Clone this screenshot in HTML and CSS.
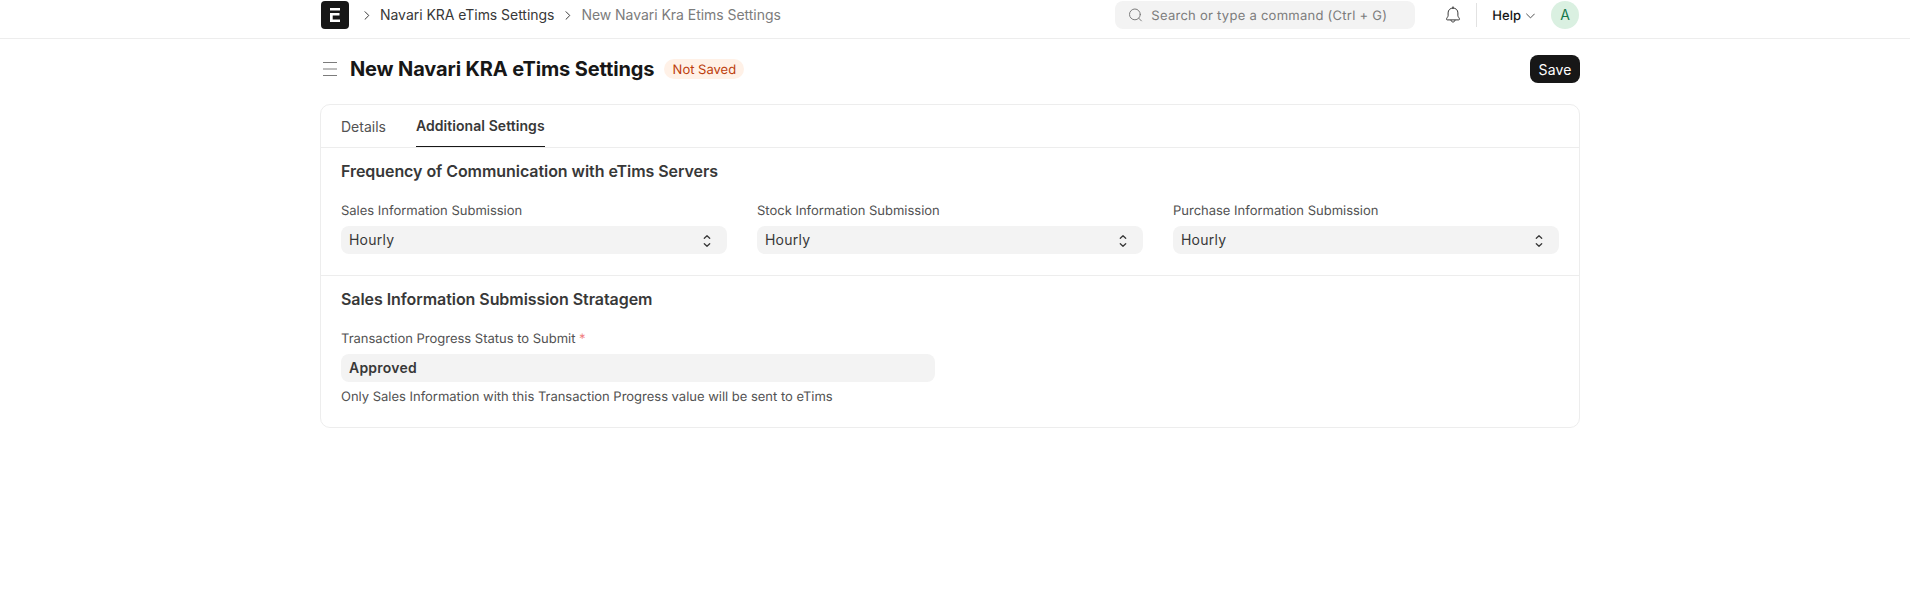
FILE: index.html
```html
<!DOCTYPE html>
<html lang="en">
<head>
<meta charset="utf-8">
<title>New Navari KRA eTims Settings</title>
<link rel="stylesheet" href="styles.css">
</head>
<body>
<header class="navbar">
  <div class="container navbar-inner">
    <svg class="logo" width="28" height="28" viewBox="0 0 28 28"><rect width="28" height="28" rx="4" fill="#171717"/><path d="M9 7h10v2.500H9zM9 12h9.500v2.500h-6.800v4H19V21H9z" fill="#fff"/></svg>
    <nav class="breadcrumbs">
      <svg class="crumb-arrow" width="6" height="9" viewBox="0 0 6 9"><path d="M1 .7l3.800 3.800L1 8.300"/></svg>
      <a class="crumb">Navari KRA eTims Settings</a>
      <svg class="crumb-arrow" width="6" height="9" viewBox="0 0 6 9"><path d="M1 .7l3.800 3.800L1 8.300"/></svg>
      <a class="crumb crumb-current">New Navari Kra Etims Settings</a>
    </nav>
    <div class="search">
      <svg width="14" height="14" viewBox="0 0 14 14" class="search-icon"><circle cx="5.900" cy="6.400" r="5.400"/><path d="M9.800 10.300l2.600 2.600"/></svg>
      <span>Search or type a command (Ctrl + G)</span>
    </div>
    <svg class="bell" width="16" height="18" viewBox="0 0 16 18"><path d="M8 2c-2.900 0-4.900 2.100-4.900 4.900v2.900c0 .9-1.600 2.300-1.600 3.300 0 .5.300.8.800.8h11.400c.5 0 .8-.3.800-.8 0-1-1.600-2.400-1.600-3.300V6.900C12.900 4.100 10.900 2 8 2zM6 14.300c.2 1 .9 1.700 2 1.700s1.800-.7 2-1.700M8 .8V2"/></svg>
    <span class="divider"></span>
    <span class="help">Help</span>
    <svg class="help-arrow" width="9" height="6" viewBox="0 0 9 6"><path d="M.6 1l3.900 3.900L8.400 1"/></svg>
    <span class="avatar">A</span>
  </div>
</header>
<main class="container">
  <div class="page-head">
    <svg class="menu" width="14" height="14" viewBox="0 0 14 14"><path d="M0 .5h14M0 7h14M0 13.500h14"/></svg>
    <h1 class="title">New Navari KRA eTims Settings</h1>
    <span class="indicator">Not Saved</span>
    <button class="save">Save</button>
  </div>
  <div class="card">
    <div class="tabs">
      <a class="tab">Details</a>
      <a class="tab tab-active">Additional Settings</a>
    </div>
    <section class="section section-frequency">
      <h2 class="section-title">Frequency of Communication with eTims Servers</h2>
      <div class="columns">
        <div class="field">
          <label class="label">Sales Information Submission</label>
          <div class="control">Hourly<svg class="sort" width="8" height="14" viewBox="0 0 8 14"><path d="M1.300 4.200L4 1.700l2.700 2.500M1.300 9.800L4 12.300l2.700-2.500"/></svg></div>
        </div>
        <div class="field">
          <label class="label">Stock Information Submission</label>
          <div class="control">Hourly<svg class="sort" width="8" height="14" viewBox="0 0 8 14"><path d="M1.300 4.200L4 1.700l2.700 2.500M1.300 9.800L4 12.300l2.700-2.500"/></svg></div>
        </div>
        <div class="field">
          <label class="label">Purchase Information Submission</label>
          <div class="control">Hourly<svg class="sort" width="8" height="14" viewBox="0 0 8 14"><path d="M1.300 4.200L4 1.700l2.700 2.500M1.300 9.800L4 12.300l2.700-2.500"/></svg></div>
        </div>
      </div>
    </section>
    <section class="section section-stratagem">
      <h2 class="section-title">Sales Information Submission Stratagem</h2>
      <div class="field field-half">
        <label class="label">Transaction Progress Status to Submit <span class="required">*</span></label>
        <div class="control control-bold">Approved</div>
        <p class="hint">Only Sales Information with this Transaction Progress value will be sent to eTims</p>
      </div>
    </section>
  </div>
</main>
</body>
</html>
```
FILE: styles.css
```css
* { box-sizing: border-box; }
body {
  margin: 0;
  background: #fff;
  color: #383838;
  font: 420 14px/20px Inter, "Liberation Sans", sans-serif;
}
svg { display: block; flex: none; fill: none; stroke-linecap: round; stroke-linejoin: round; }
.container { width: 1260px; margin-left: 320px; }
.navbar { height: 39px; border-bottom: 1px solid #ededed; padding-top: 1px; }
.navbar-inner { display: flex; align-items: center; height: 28px; padding: 0 1px; }
.logo { margin-right: 15px; }
.breadcrumbs { display: flex; align-items: center; }
.crumb-arrow { stroke: #383838; margin-top: 1px; }
.crumb { margin: 0 11px 0 10px; white-space: nowrap; letter-spacing: -0.04px; }
.crumb-current { color: #7c7c7c; margin-right: 0; }
.search, .help, .indicator, .label, .hint { font-size: 13px; text-rendering: geometricPrecision; }
.search {
  display: flex; align-items: center; gap: 8px;
  width: 300px; height: 28px; margin-left: auto; padding: 0 14px;
  border-radius: 8px; background: #f3f3f3; color: #7c7c7c;
  letter-spacing: 0.26px; white-space: nowrap;
}
.search span { padding-top: 2px; }
.search-icon { stroke: #7c7c7c; }
.bell { stroke: #383838; margin-left: 30px; }
.divider { width: 1px; height: 24px; background: #e2e2e2; margin: 0 15px; }
.help { color: #171717; font-weight: 500; padding-top: 2px; }
.help-arrow { stroke: #525252; margin: 2px 16px 0 5px; }
.avatar {
  width: 28px; height: 28px; border-radius: 50%;
  background: #daf0e1; color: #16794c; text-align: center; line-height: 28px;
}
.page-head { display: flex; align-items: center; height: 65px; padding: 0 0 5px 3px; }
.menu { stroke: #7c7c7c; stroke-linecap: butt; }
.title { margin: 0 0 0 13px; color: #171717; font-size: 20px; font-weight: 700; line-height: 28px; letter-spacing: -0.13px; }
.indicator {
  margin-left: 10px; width: 80px; height: 20px; border-radius: 10px;
  background: #fff1e7; color: #bd3e0c; line-height: 22px; text-align: center;
}
.save {
  margin-left: auto; width: 50px; height: 28px; padding: 1px 0 0; border: 0; border-radius: 8px;
  background: #171717; color: #fff; font: inherit; letter-spacing: 0.15px;
}
.card { height: 324px; border: 1px solid #ededed; border-radius: 10px; }
.tabs { display: flex; gap: 30px; height: 43px; padding-left: 20px; border-bottom: 1px solid #ededed; }
.tab { height: 42px; line-height: 44px; color: #525252; }
.tab-active { color: #383838; font-weight: 600; line-height: 42px; border-bottom: 1px solid #171717; letter-spacing: 0.06px; }
.section { padding: 13px 20px 0; }
.section-frequency { height: 128px; border-bottom: 1px solid #ededed; }
.section-title { margin: 0; font-size: 16px; line-height: 20px; font-weight: 600; letter-spacing: -0.06px; }
.columns { display: grid; grid-template-columns: repeat(3, 386px); gap: 30px; }
.label { display: block; margin: 20px 0 5px; height: 20px; color: #525252; letter-spacing: -0.01px; }
.required { color: #f08080; }
.control {
  display: flex; align-items: center; justify-content: space-between;
  height: 28px; padding: 0 16px 0 8px; border-radius: 8px; background: #f3f3f3; letter-spacing: 0.22px;
}
.control-bold { font-weight: 600; }
.sort { stroke: #383838; stroke-width: 1.3; margin-top: 2px; }
.field-half { width: 594px; }
.hint { margin: 5px 0 0; color: #525252; letter-spacing: -0.015px; }
```
